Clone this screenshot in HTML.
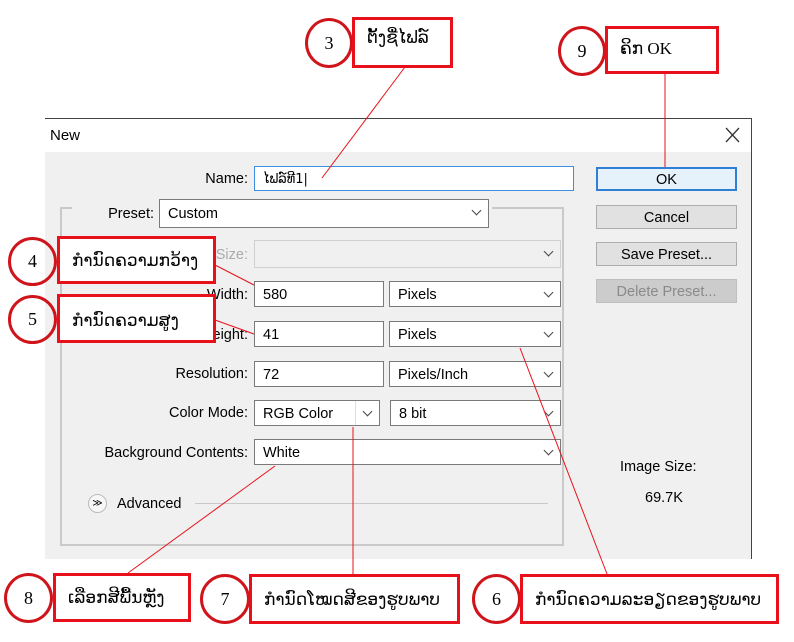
<!DOCTYPE html>
<html><head><meta charset="utf-8"><style>
*{margin:0;padding:0;box-sizing:border-box}
body{width:794px;height:642px;background:#fff;position:relative;overflow:hidden;font-family:"Liberation Sans",sans-serif;font-size:14.5px;color:#000}
.a{position:absolute}
.dlg{left:45px;top:118px;width:707px;height:441px;border-top:1px solid #444;border-right:1px solid #444;background:#f0f0f0}
.title{left:45px;top:119px;width:706px;height:33px;background:#fff}
.inp{position:absolute;background:#fff;border:1px solid #7a7a7a;height:26px;line-height:27px;padding-left:8px}
.sel{position:absolute;background:#fff;border:1px solid #7a7a7a;height:26px;line-height:27px;padding-left:8px}
.sel:after{content:"";position:absolute;right:8px;top:7px;width:6px;height:6px;border-right:1.3px solid #444;border-bottom:1.3px solid #444;transform:rotate(45deg)}
.lbl{position:absolute;text-align:right;width:220px}
.btn{position:absolute;left:596px;width:141px;height:24px;border:1px solid #adadad;background:#e1e1e1;text-align:center;line-height:24px}
.circ{position:absolute;border:3px solid #d0141c;border-radius:50%;text-align:center;font-family:"Liberation Serif",serif;font-size:18px}
.box{position:absolute;border:3px solid #e8111b;background:#fff;font-family:"Liberation Serif","DejaVu Sans",sans-serif;font-size:17px;padding-left:12px}
svg{position:absolute;left:0;top:0}
</style></head><body>
<div class="a dlg"></div>
<div class="a title"></div>
<div class="a" style="left:50px;top:127px;font-size:15px">New</div>

<div class="lbl" style="left:28px;top:171px">Name:</div>
<div class="inp" style="left:254px;top:166px;width:320px;height:25px;border-color:#3c8ee0;font-family:'DejaVu Sans',sans-serif;font-size:13px;line-height:25px">ໄຟລ໌ທີ1|</div>

<div class="btn" style="top:167px;border:2px solid #2f7fd6;background:#e5f1fb;line-height:22px">OK</div>
<div class="btn" style="top:205px">Cancel</div>
<div class="btn" style="top:242px">Save Preset...</div>
<div class="btn" style="top:279px;background:#cccccc;border-color:#bfbfbf;color:#8a8a8a">Delete Preset...</div>

<div class="a" style="left:60px;top:207px;width:504px;height:339px;border:2px solid #c9c9c9"></div>
<div class="a" style="left:72px;top:200px;width:420px;height:20px;background:#f0f0f0"></div>
<div class="lbl" style="left:-66px;top:206px">Preset:</div>
<div class="sel" style="left:159px;top:199px;width:330px;height:29px;line-height:29px">Custom</div>

<div class="lbl" style="left:28px;top:247px;color:#aaa">Size:</div>
<div class="sel" style="left:254px;top:240px;width:307px;height:28px;background:#f0f0f0;border-color:#d0d0d0"></div>
<div class="lbl" style="left:28px;top:287px">Width:</div>
<div class="inp" style="left:254px;top:281px;width:130px">580</div>
<div class="sel" style="left:389px;top:281px;width:172px">Pixels</div>
<div class="lbl" style="left:28px;top:327px">Height:</div>
<div class="inp" style="left:254px;top:321px;width:130px">41</div>
<div class="sel" style="left:389px;top:321px;width:172px">Pixels</div>
<div class="lbl" style="left:28px;top:366px">Resolution:</div>
<div class="inp" style="left:254px;top:361px;width:130px">72</div>
<div class="sel" style="left:389px;top:361px;width:172px">Pixels/Inch</div>
<div class="lbl" style="left:28px;top:405px">Color Mode:</div>
<div class="sel" style="left:254px;top:400px;width:126px">RGB Color</div>
<div class="a" style="left:355px;top:401px;width:1px;height:24px;background:#cfe3f5"></div>
<div class="sel" style="left:390px;top:400px;width:171px">8 bit</div>
<div class="lbl" style="left:28px;top:445px">Background Contents:</div>
<div class="sel" style="left:254px;top:439px;width:307px">White</div>

<div class="a" style="left:88px;top:494px;width:19px;height:19px;border-radius:50%;border:1px solid #bbb;background:#f7f7f7;font-size:10px;text-align:center;line-height:17px">≫</div>
<div class="a" style="left:117px;top:496px">Advanced</div>
<div class="a" style="left:195px;top:503px;width:353px;height:1px;background:#c9c9c9"></div>

<div class="a" style="left:620px;top:459px">Image Size:</div>
<div class="a" style="left:645px;top:490px">69.7K</div>

<svg width="794" height="642">
<g stroke="#333" stroke-width="1.3"><line x1="726" y1="128" x2="739" y2="142"/><line x1="739" y1="128" x2="726" y2="142"/></g>
<g stroke="#e8111b" stroke-width="1" fill="none">
<line x1="405" y1="67" x2="322" y2="178"/>
<line x1="665" y1="73" x2="665" y2="167"/>
<line x1="215" y1="265" x2="254" y2="285"/>
<line x1="215" y1="320" x2="254" y2="334"/>
<line x1="128" y1="573" x2="275" y2="466"/>
<line x1="353" y1="427" x2="353" y2="574"/>
<line x1="520" y1="348" x2="607" y2="574"/>
</g></svg>

<div class="circ" style="left:305px;top:18px;width:48px;height:50px;line-height:44px">3</div>
<div class="box" style="left:352px;top:17px;width:101px;height:51px;padding-top:8px">ຕັ້ງຊື່ໄຟລ໌</div>
<div class="circ" style="left:558px;top:26px;width:48px;height:50px;line-height:44px">9</div>
<div class="box" style="left:605px;top:26px;width:114px;height:48px;padding-top:10px">ຄິກ OK</div>
<div class="circ" style="left:8px;top:237px;width:49px;height:49px;line-height:43px">4</div>
<div class="box" style="left:57px;top:236px;width:159px;height:48px;padding-top:12px">ກຳນົດຄວາມກວ້າງ</div>
<div class="circ" style="left:8px;top:295px;width:49px;height:49px;line-height:43px">5</div>
<div class="box" style="left:57px;top:294px;width:159px;height:49px;padding-top:14px">ກຳນົດຄວາມສູງ</div>
<div class="circ" style="left:4px;top:573px;width:49px;height:50px;line-height:44px">8</div>
<div class="box" style="left:53px;top:573px;width:138px;height:49px;padding-top:12px">ເລືອກສີພື້ນຫຼັງ</div>
<div class="circ" style="left:200px;top:574px;width:50px;height:50px;line-height:44px">7</div>
<div class="box" style="left:249px;top:574px;width:211px;height:50px;padding-top:13px">ກຳນົດໂໝດສີຂອງຮູບພາບ</div>
<div class="circ" style="left:472px;top:574px;width:49px;height:50px;line-height:44px">6</div>
<div class="box" style="left:520px;top:574px;width:259px;height:50px;padding-top:13px">ກຳນົດຄວາມລະອຽດຂອງຮູບພາບ</div>
</body></html>
